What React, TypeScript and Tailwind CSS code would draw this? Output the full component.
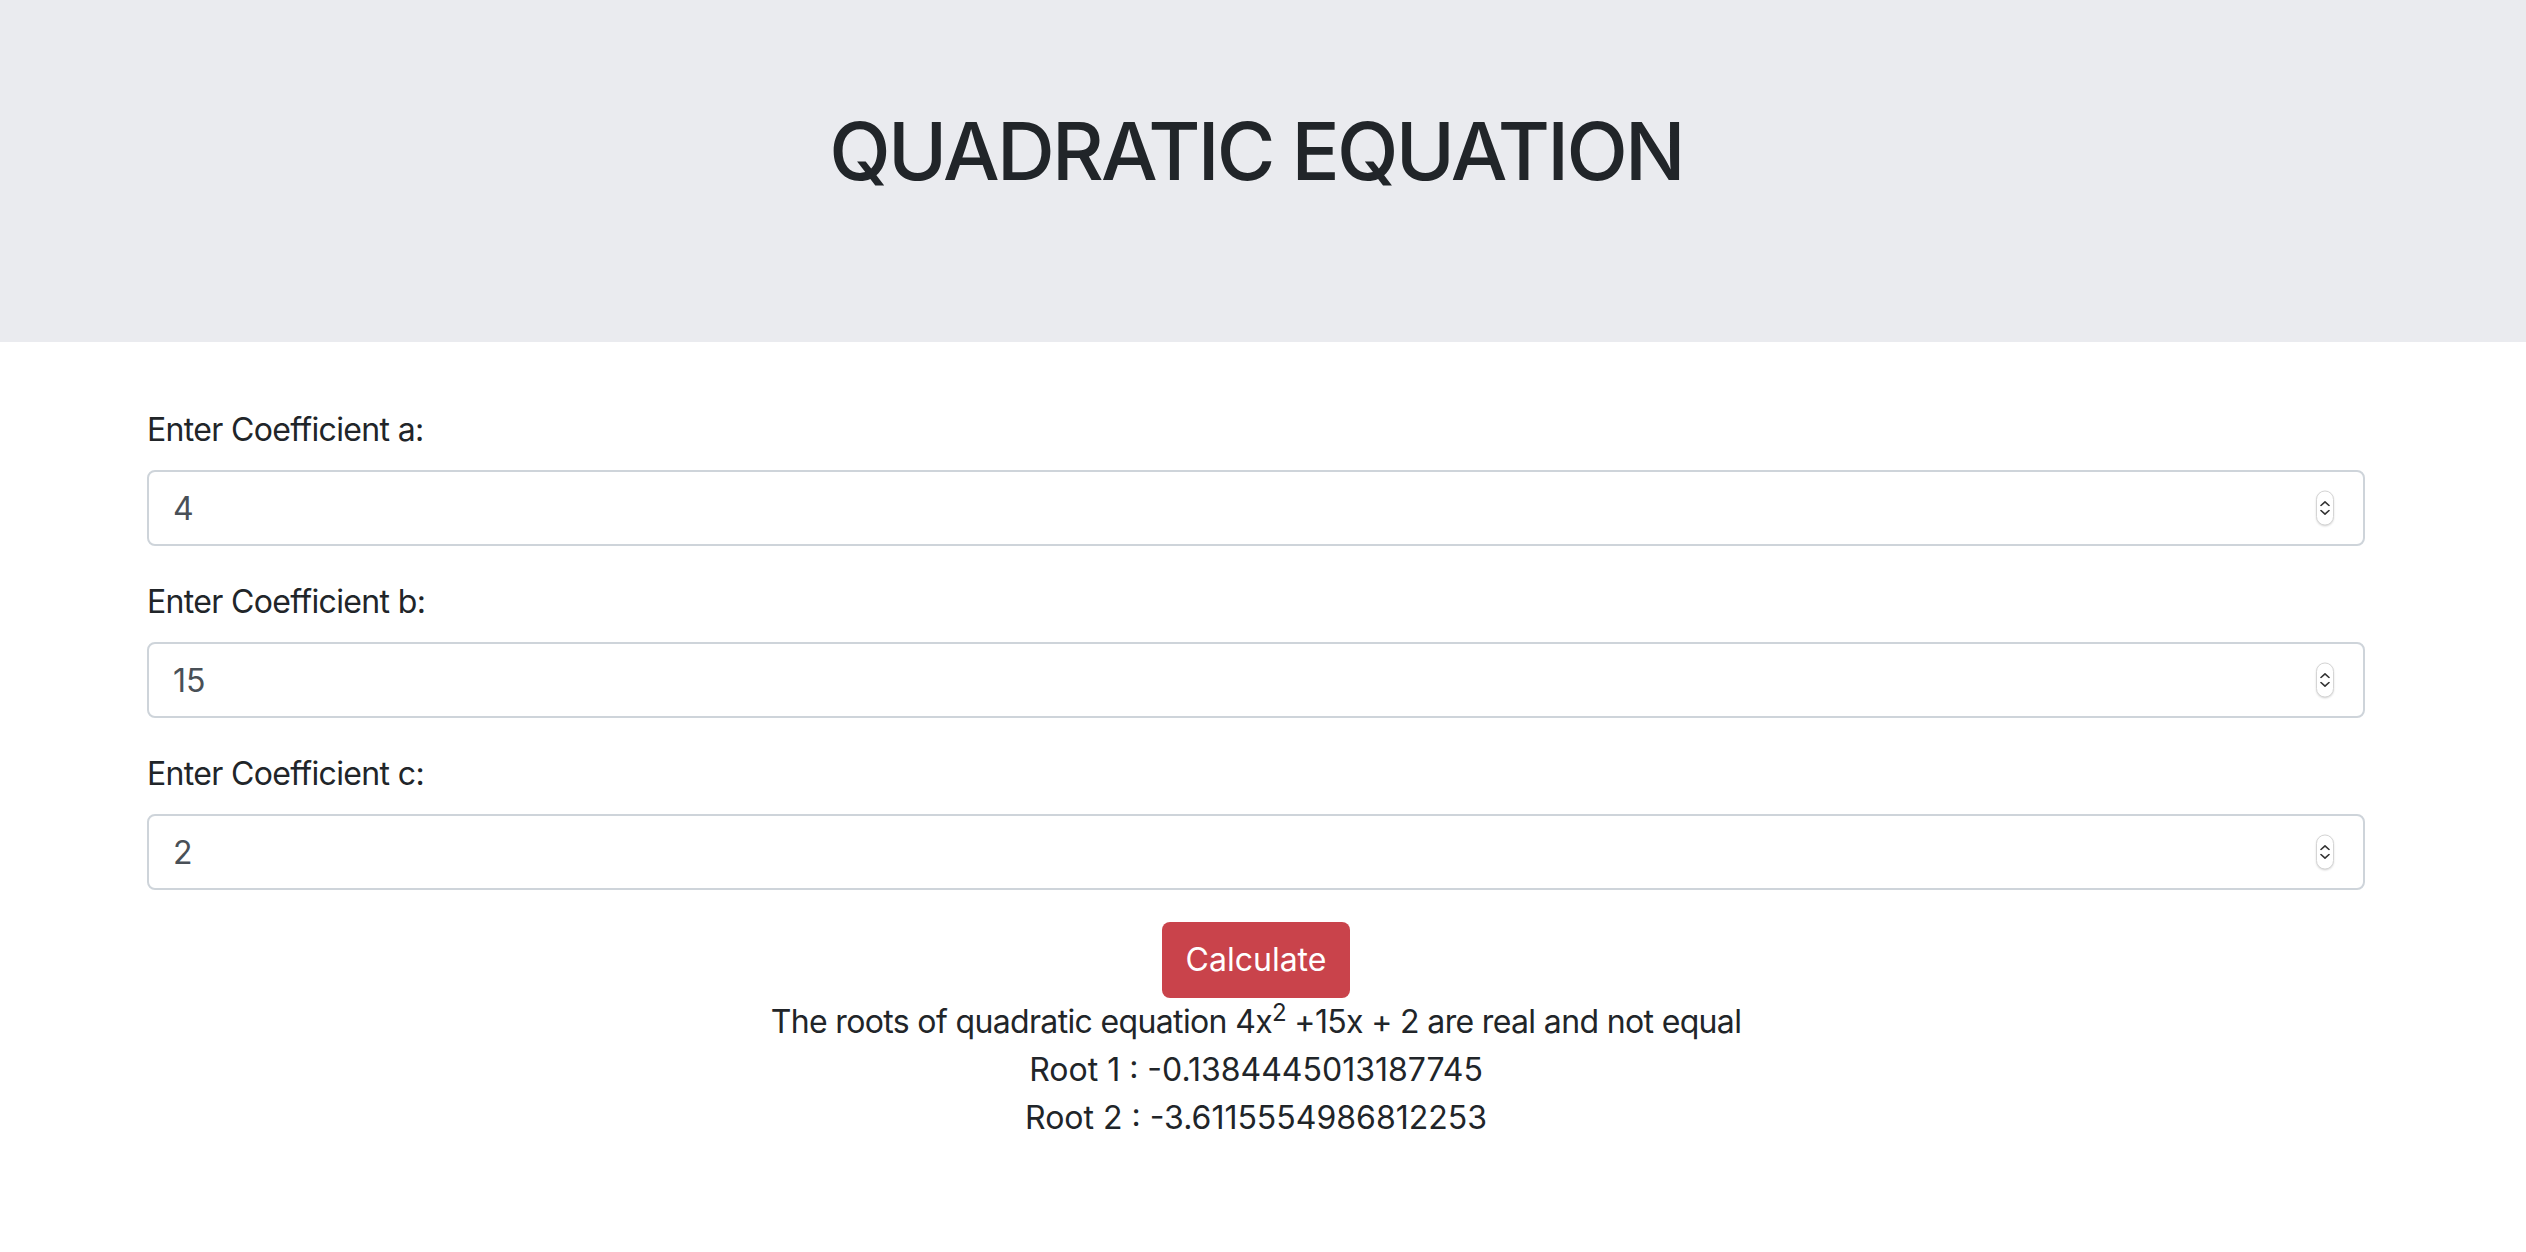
import { useState } from 'react';

function Spinner() {
  return (
    <div className="pointer-events-none absolute right-[31px] top-1/2 flex h-[35px] w-[18px] -translate-y-1/2 flex-col items-center justify-center gap-[3px] rounded-full border border-[#d5d5d5] bg-white shadow-[0_1px_2px_rgba(0,0,0,0.15)]">
      <svg width="10" height="6" viewBox="0 0 10 6" fill="none">
        <path d="M1 5L5 1.3L9 5" stroke="#333" strokeWidth="1.6" strokeLinecap="round" strokeLinejoin="round" />
      </svg>
      <svg width="10" height="6" viewBox="0 0 10 6" fill="none">
        <path d="M1 1L5 4.7L9 1" stroke="#333" strokeWidth="1.6" strokeLinecap="round" strokeLinejoin="round" />
      </svg>
    </div>
  );
}

function Field({ label, value, onChange }: { label: string; value: string; onChange: (v: string) => void }) {
  return (
    <div className="mb-[32px]">
      <label className="mb-[16px] block text-[32px] leading-[48px] tracking-[-0.65px]">{label}</label>
      <div className="relative">
        <input
          type="number"
          value={value}
          onChange={(e) => onChange(e.target.value)}
          className="block h-[76px] w-full rounded-[8px] border-2 border-[#ced4da] bg-white px-[24px] text-[32px] text-[#495057] outline-none [appearance:textfield] [&::-webkit-inner-spin-button]:appearance-none [&::-webkit-outer-spin-button]:appearance-none"
        />
        <Spinner />
      </div>
    </div>
  );
}

export default function App() {
  const [a, setA] = useState('4');
  const [b, setB] = useState('15');
  const [c, setC] = useState('2');

  const A = parseFloat(a);
  const B = parseFloat(b);
  const C = parseFloat(c);
  const d = B * B - 4 * A * C;
  const r1 = (-B + Math.sqrt(d)) / (2 * A);
  const r2 = (-B - Math.sqrt(d)) / (2 * A);

  return (
    <div className="min-h-screen bg-white text-[#212529]" style={{ fontFamily: 'Inter, "Noto Sans", sans-serif' }}>
      <header className="h-[342px] bg-[#eaebef] pl-[147px] pr-[161px] pt-[103px]">
        <h1 className="text-center text-[80px] font-medium leading-[96px] tracking-[-2.7px]">QUADRATIC EQUATION</h1>
      </header>

      <main className="pl-[147px] pr-[161px] pt-[64px]">
        <Field label="Enter Coefficient a:" value={a} onChange={setA} />
        <Field label="Enter Coefficient b:" value={b} onChange={setB} />
        <Field label="Enter Coefficient c:" value={c} onChange={setC} />

        <div className="flex justify-center">
          <button className="h-[76px] rounded-[8px] bg-[#c9434b] px-[24px] text-[32px] text-white">Calculate</button>
        </div>

        <div className="text-center text-[32px] leading-[48px]">
          <p className="tracking-[-0.65px]">
            The roots of quadratic equation {a}x<sup className="relative -top-[0.5em] align-baseline text-[75%]">2</sup> +{b}x + {c} are
            {d > 0 ? ' real and not equal' : d === 0 ? ' real and equal' : ' complex'}
          </p>
          <p>Root 1 : {r1}</p>
          <p>Root 2 : {r2}</p>
        </div>
      </main>
    </div>
  );
}
